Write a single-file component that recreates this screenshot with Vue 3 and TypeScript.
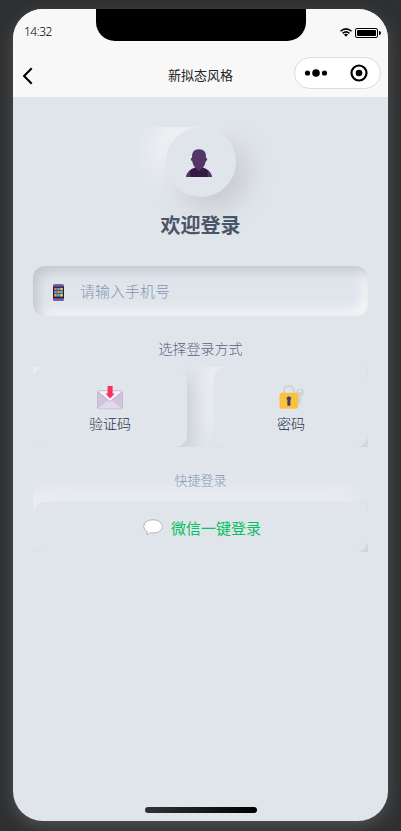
<script setup lang="ts">
import { ref } from 'vue'

const time = '14:32'
const phone = ref('')
const keyColors = ['#ff6a3c', '#3ab0ff', '#ffc53e', '#3ab0ff', '#ff9a2c', '#48d0c0', '#ff9a2c', '#38b8ff', '#ffd84c']
</script>

<template>
  <div class="stage">
    <div class="phone">
      <header class="header">
        <div class="notch"></div>
        <div class="status">
          <span class="time">{{ time }}</span>
          <div class="signals">
            <svg width="12" height="9" viewBox="0 0 12 9" fill="none" stroke="#000" stroke-width="1.5">
              <path d="M.5 3.2Q6-1.5 11.5 3.2M2.6 5.3Q6 2.5 9.4 5.3" />
              <path d="M3.9 6.6Q6 5 8.1 6.6L6 8.8Z" fill="#000" stroke="none" />
            </svg>
            <div class="battery"><i></i></div>
            <b class="tip"></b>
          </div>
        </div>
        <nav class="nav">
          <svg class="back" width="12" height="18" viewBox="0 0 12 18" fill="none" stroke="#000" stroke-width="2.1">
            <path d="M9.7 1.2 2.1 9l7.6 7.8" />
          </svg>
          <span class="title">新拟态风格</span>
          <div class="capsule">
            <svg width="24" height="8" viewBox="0 0 24 8">
              <circle cx="3.5" cy="4" r="2.6" /><circle cx="12" cy="4" r="3.8" /><circle cx="20.5" cy="4" r="2.6" />
            </svg>
            <svg width="18" height="18" viewBox="0 0 18 18">
              <circle cx="9" cy="9" r="7.5" fill="none" stroke="#000" stroke-width="2.2" />
              <circle cx="9" cy="9" r="3.3" />
            </svg>
          </div>
        </nav>
      </header>

      <main class="page">
        <section class="welcome">
          <div class="avatar">
            <svg width="28" height="28" viewBox="0 0 28 28">
              <path d="M1 28Q2.500 21 10 18.500h8q7.500 2.500 9 9.500Z" fill="#321a42" />
              <path d="M1 28q1-4.500 4-6.800L5.500 28ZM27 28q-1-4.500-4-6.800L22.500 28Z" fill="#533566" />
              <path d="M7 9Q6.200.3 14 .3T21 9q1.300-.3 1.200 1.300Q22 12 20.800 12.200 20.200 16.500 17.500 19L14 22.200l-3.500-3.200Q7.800 16.500 7.200 12.200 6 12 5.800 10.300 5.700 8.700 7 9Z" fill="#533566" />
            </svg>
          </div>
          <h1>欢迎登录</h1>
        </section>

        <label class="field">
          <svg width="11" height="17" viewBox="0 0 11 17">
            <rect width="11" height="17" rx="1.500" fill="#7462a0" />
            <rect y="2.500" width="11" height="11.800" fill="#30184a" />
            <rect v-for="(c, i) in keyColors" :key="i" :x="1.200 + (i % 3) * 3" :y="3.800 + Math.floor(i / 3) * 3.100" width="2.600" height="2.600" :fill="c" />
          </svg>
          <input v-model="phone" type="tel" placeholder="请输入手机号" />
        </label>

        <p class="caption">选择登录方式</p>
        <section class="methods">
          <button class="method" type="button">
            <svg width="28" height="26" viewBox="0 0 28 26">
              <rect x="1.500" y="5.800" width="25" height="18" rx="1" fill="#cfc4da" stroke="#c6bdd0" />
              <path d="M2 23.500 14 14l12 9.500Z" fill="#e2d7ef" />
              <path d="M2 6.200h24L14 16.500Z" fill="#f5effa" />
              <path d="m2 7 12 9.800L26 7" fill="none" stroke="#b5abc0" stroke-width=".8" />
              <path d="M11.600 1h5v7.500h2L14.100 13.500 9.600 8.500h2Z" fill="#fa2f60" />
            </svg>
            <span>验证码</span>
          </button>
          <button class="method" type="button">
            <svg width="28" height="26" viewBox="0 0 28 26">
              <path d="M7.100 8V5.800q0-5 4.800-5t4.800 5V8" fill="none" stroke="#d2d3d5" stroke-width="2.200" />
              <path d="M20.500 11q-3.500-5 1.500-7 5-.8 5 3.500 0 2.800-3 4.200v7l-3 1.500Z" fill="#d2d3d5" />
              <circle cx="22.800" cy="6.300" r="1" fill="#f1f1f1" />
              <rect x="2.500" y="7.800" width="18.500" height="16" rx="2" fill="#f9c23c" />
              <path d="M10.700 15.400q-2-3.500 1.200-3.700 3.200.2 1.200 3.700v5h-2.400Z" fill="#433b6b" stroke="#433b6b" stroke-width=".6" />
            </svg>
            <span>密码</span>
          </button>
        </section>

        <section class="quick">
          <p>快捷登录</p>
          <button class="wechat" type="button">
            <svg width="20" height="17" viewBox="0 0 20 17">
              <path d="M10 .8c5.500 0 9.300 3 9.300 6.700S15.500 14 10 14q-1.500 0-2.800-.3Q5.500 15 4 15.900l.2-3.200Q.7 10.500.7 7.500.7 3.800 4.200 2 6.500.8 10 .8Z" fill="#fff" stroke="#b3b4b6" />
            </svg>
            <span>微信一键登录</span>
          </button>
        </section>
      </main>
      <div class="home"></div>
    </div>
  </div>
</template>

<style>
body {
  margin: 0;
  background: #2f3032;
}
</style>

<style scoped>
* {
  box-sizing: border-box;
}
.stage {
  height: 831px;
  padding: 9px 13px 10px;
  overflow: hidden;
  background: #2f3032;
  font-family: "Noto Sans", "Noto Sans CJK SC", sans-serif;
  font-weight: 300;
}
.phone {
  display: flex;
  flex-direction: column;
  align-items: center;
  width: 375px;
  height: 812px;
  overflow: hidden;
  border-radius: 30px;
  background: #e0e5ec;
  box-shadow: 0 5px 16px rgba(115, 115, 115, 0.5);
}
.header {
  position: relative;
  flex: none;
  width: 100%;
  height: 88px;
  background: #f8f8f8;
}
.notch {
  position: absolute;
  left: 83px;
  top: 0;
  width: 210px;
  height: 32px;
  background: #000;
  border-radius: 0 0 19px 19px;
}
.status {
  display: flex;
  align-items: center;
  justify-content: space-between;
  height: 44px;
  padding: 3px 7px 0 11px;
}
.time {
  font-size: 12px;
  letter-spacing: -0.5px;
  line-height: 16px;
  margin-top: -1px;
  color: #000;
}
.signals {
  display: flex;
  align-items: center;
}
.battery {
  width: 23px;
  height: 10px;
  margin-left: 3px;
  padding: 1px;
  border: 1px solid #000;
  border-radius: 2px;
}
.battery i {
  display: block;
  height: 6px;
  background: #000;
  border-radius: 1px;
}
.tip {
  width: 2px;
  height: 4px;
  margin-left: 1px;
  background: #000;
  border-radius: 0 2px 2px 0;
}
.nav {
  display: grid;
  grid-template-columns: 85px 1fr 94px;
  align-items: center;
  height: 44px;
  padding: 0 0 0 9px;
}
.back {
  margin-top: 1px;
}
.title {
  justify-self: center;
  font-size: 13px;
  font-weight: 400;
  line-height: 18px;
  color: #222;
}
.capsule {
  display: flex;
  align-items: center;
  justify-content: space-between;
  width: 87px;
  height: 32px;
  margin-top: -4px;
  padding: 0 12px 0 9px;
  background: #fff;
  border: 1px solid #dcdcdc;
  border-radius: 16px;
}
.page {
  flex: 1;
  width: 100%;
  padding: 30px 20px 0;
}
.welcome {
  display: flex;
  flex-direction: column;
  align-items: center;
  height: 139px;
  overflow: hidden;
}
.avatar {
  display: flex;
  flex: none;
  align-items: center;
  justify-content: center;
  width: 70px;
  height: 70px;
  padding: 2px 3px 0 0;
  border-radius: 50%;
  background: #e0e5ec;
  box-shadow: 10px 10px 30px #c3c6ca, -10px -10px 30px #f9fafb;
}
h1 {
  margin: 15px 0 0;
  font-size: 20px;
  line-height: 28px;
  font-weight: 700;
  color: #4a5568;
}
.field {
  display: flex;
  align-items: center;
  height: 50px;
  padding: 2px 20px 0;
  border-radius: 12px;
  box-shadow: inset 5px 5px 12px #c2c6cc, inset -5px -5px 12px #fafafa;
}
input {
  flex: 1;
  min-width: 0;
  margin-left: 16px;
  padding: 0 0 2px;
  border: 0;
  outline: 0;
  background: none;
  font: 300 15px/22px "Noto Sans", "Noto Sans CJK SC", sans-serif;
}
input::placeholder {
  color: #8497b0;
  opacity: 1;
}
.caption {
  margin: 23px 0 8px;
  font-size: 14px;
  line-height: 20px;
  text-align: center;
  color: #55657e;
}
.methods {
  display: flex;
  justify-content: space-between;
  height: 80px;
  overflow: hidden;
}
button {
  border: 0;
  background: #e0e5ec;
  border-radius: 12px;
  font-family: inherit;
  font-weight: 300;
  box-shadow: 8px 8px 20px #cbcfd4, -8px -8px 20px #f1f3f4;
}
.method {
  display: flex;
  flex-direction: column;
  align-items: center;
  width: 154px;
  height: 80px;
  padding: 18px 0 0;
  font-size: 14px;
  line-height: 20px;
  color: #263044;
}
.method span {
  margin-top: 3px;
}
.quick {
  margin-top: 23px;
  height: 82px;
  overflow: hidden;
}
.quick p {
  margin: 0 0 12px;
  padding-top: 1px;
  font-size: 13px;
  line-height: 19px;
  text-align: center;
  color: #8497b0;
}
.wechat {
  display: flex;
  align-items: center;
  justify-content: center;
  gap: 8px;
  width: 100%;
  height: 50px;
  padding: 1px 0 0 3px;
  font-size: 15px;
  font-weight: 400;
  line-height: 22px;
  color: #07c160;
}
.home {
  flex: none;
  width: 112px;
  height: 6px;
  margin: 0 0 8px 1px;
  border-radius: 3px;
  background: linear-gradient(90deg, #333, #000);
}
</style>
